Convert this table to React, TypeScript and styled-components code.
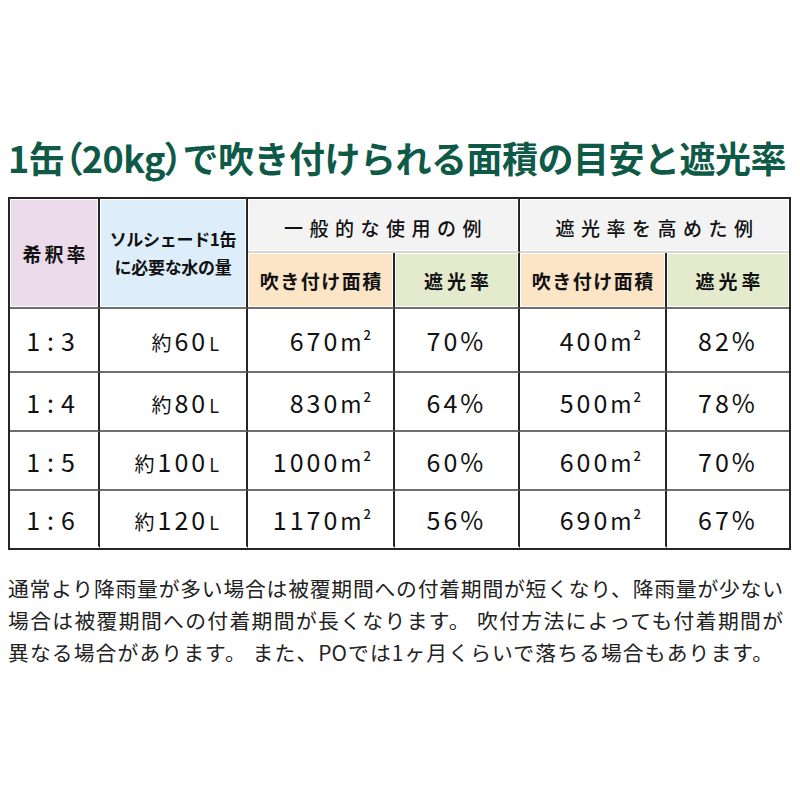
import React from "react";
import styled, { createGlobalStyle } from "styled-components";

const Global = createGlobalStyle`
  html, body { margin: 0; padding: 0; background: #fff; }
  #root { width: 800px; height: 800px; }
`;

const JP = `"Noto Sans CJK JP", "Noto Sans", sans-serif`;

const Page = styled.div`
  width: 800px;
  height: 800px;
  box-sizing: border-box;
  padding: 134px 9px 0 8px;
  font-family: ${JP};
  color: #1a1a1a;
`;

const Title = styled.h1`
  margin: 0;
  font-size: 36px;
  line-height: 46px;
  font-weight: 700;
  color: #0e5a47;
  letter-spacing: -0.5px;
  white-space: nowrap;
`;

const Narrow = styled.span`
  font-feature-settings: "palt";
`;

const Grid = styled.div`
  margin-top: 17px;
  display: grid;
  grid-template-columns: 90px 148px 147px 125px 147px 122px;
  grid-template-rows: 54px 56px 64px 59px 59px 57px;
  border: 2px solid #262626;
  width: fit-content;
`;

type Line = "dark" | "gray" | "light" | "none";
const lineColor: Record<Line, string> = {
  dark: "#262626",
  gray: "#6e6e6e",
  light: "#d6d6d6",
  none: "transparent",
};

const Cell = styled.div<{
  $bg?: string;
  $last?: boolean;
  $bottom?: Line;
  $rows?: number;
  $cols?: number;
  $align?: "center" | "right";
  $pad?: number;
}>`
  box-sizing: border-box;
  display: flex;
  align-items: center;
  justify-content: ${(p) => (p.$align === "right" ? "flex-end" : "center")};
  padding-right: ${(p) => (p.$pad ? `${p.$pad}px` : "0")};
  background: ${(p) => p.$bg || "#fff"};
  box-shadow: inset 0 0 0 1px #fff;
  border-right: ${(p) => (p.$last ? "none" : `2px solid ${lineColor.dark}`)};
  border-bottom: 2px solid ${(p) => lineColor[p.$bottom || "none"]};
  ${(p) => (p.$rows ? `grid-row: span ${p.$rows};` : "")}
  ${(p) => (p.$cols ? `grid-column: span ${p.$cols};` : "")}
  text-align: center;
`;

const HeadLabel = styled.span`
  font-size: 19px;
  font-weight: 700;
  letter-spacing: 3px;
  padding-left: 3px;
  color: #111;
`;

const WaterLabel = styled.span`
  font-size: 17px;
  font-weight: 700;
  line-height: 28px;
  letter-spacing: -0.3px;
  color: #111;
`;

const GroupLabel = styled.span`
  font-size: 19px;
  font-weight: 500;
  letter-spacing: 6.5px;
  padding-left: 6px;
  margin-top: 4px;
  color: #111;
`;

const SubLabel = styled.span<{ $spacing: number }>`
  font-size: 19px;
  font-weight: 700;
  letter-spacing: ${(p) => p.$spacing}px;
  padding-left: ${(p) => p.$spacing}px;
  color: #111;
`;

const Value = styled.span<{ $spacing?: number }>`
  font-size: 25px;
  font-weight: 400;
  color: #111;
  letter-spacing: ${(p) => (p.$spacing ?? 3)}px;
  white-space: nowrap;
  display: inline-flex;
  align-items: baseline;
`;

const Prefix = styled.span`
  font-size: 20px;
  letter-spacing: 3px;
`;

const UnitL = styled.span`
  font-size: 18px;
  letter-spacing: 0;
  margin-left: 1px;
`;

const UnitM = styled.span`
  font-size: 23px;
  letter-spacing: 0;
`;

const Sup = styled.sup`
  font-size: 13px;
  font-weight: 500;
  letter-spacing: 0;
  vertical-align: 0;
  position: relative;
  top: -11px;
  margin-left: 2px;
`;

const Note = styled.div`
  margin-top: 22px;
  font-size: 20.8px;
  line-height: 32px;
  color: #222;
`;

const NoteLine = styled.div<{ $width: number }>`
  width: ${(p) => p.$width}px;
  white-space: nowrap;
  text-align: justify;
  text-align-last: justify;
`;

type Row = {
  ratio: string;
  water: string;
  areaA: string;
  rateA: string;
  areaB: string;
  rateB: string;
};

const rows: Row[] = [
  { ratio: "1:3", water: "60", areaA: "670", rateA: "70%", areaB: "400", rateB: "82%" },
  { ratio: "1:4", water: "80", areaA: "830", rateA: "64%", areaB: "500", rateB: "78%" },
  { ratio: "1:5", water: "100", areaA: "1000", rateA: "60%", areaB: "600", rateB: "70%" },
  { ratio: "1:6", water: "120", areaA: "1170", rateA: "56%", areaB: "690", rateB: "67%" },
];

const Area = ({ n }: { n: string }) => (
  <Value>
    {n}
    <UnitM>m</UnitM>
    <Sup>2</Sup>
  </Value>
);

export default function App() {
  return (
    <>
      <Global />
      <Page>
        <Title>
          1缶<Narrow>（</Narrow>20kg<Narrow>）</Narrow>で吹き付けられる面積の目安と遮光率
        </Title>
        <Grid>
          <Cell $rows={2} $bg="#eadaea" $bottom="gray">
            <HeadLabel>希釈率</HeadLabel>
          </Cell>
          <Cell $rows={2} $bg="#ddedf9" $bottom="gray">
            <WaterLabel>
              ソルシェード1缶
              <br />
              に必要な水の量
            </WaterLabel>
          </Cell>
          <Cell $cols={2} $bg="#f3f3f3" $bottom="light">
            <GroupLabel>一般的な使用の例</GroupLabel>
          </Cell>
          <Cell $cols={2} $bg="#f3f3f3" $bottom="light" $last>
            <GroupLabel>遮光率を高めた例</GroupLabel>
          </Cell>
          <Cell $bg="#fce4c6" $bottom="gray">
            <SubLabel $spacing={1.5}>吹き付け面積</SubLabel>
          </Cell>
          <Cell $bg="#e4ebcd" $bottom="gray">
            <SubLabel $spacing={4}>遮光率</SubLabel>
          </Cell>
          <Cell $bg="#fce4c6" $bottom="gray">
            <SubLabel $spacing={1.5}>吹き付け面積</SubLabel>
          </Cell>
          <Cell $bg="#e4ebcd" $bottom="gray" $last>
            <SubLabel $spacing={4}>遮光率</SubLabel>
          </Cell>

          {rows.map((r, i) => {
            const bottom: Line = i === rows.length - 1 ? "none" : "gray";
            return (
              <React.Fragment key={r.ratio}>
                <Cell $bottom={bottom}>
                  <Value $spacing={7}>{r.ratio}</Value>
                </Cell>
                <Cell $bottom={bottom} $align="right" $pad={27}>
                  <Value>
                    <Prefix>約</Prefix>
                    {r.water}
                    <UnitL>L</UnitL>
                  </Value>
                </Cell>
                <Cell $bottom={bottom} $align="right" $pad={22}>
                  <Area n={r.areaA} />
                </Cell>
                <Cell $bottom={bottom}>
                  <Value>{r.rateA}</Value>
                </Cell>
                <Cell $bottom={bottom} $align="right" $pad={24}>
                  <Area n={r.areaB} />
                </Cell>
                <Cell $bottom={bottom} $last>
                  <Value>{r.rateB}</Value>
                </Cell>
              </React.Fragment>
            );
          })}
        </Grid>
        <Note>
          <NoteLine $width={775}>通常より降雨量が多い場合は被覆期間への付着期間が短くなり、降雨量が少ない</NoteLine>
          <NoteLine $width={775}>場合は被覆期間への付着期間が長くなります。 吹付方法によっても付着期間が</NoteLine>
          <NoteLine $width={765}>異なる場合があります。 また、POでは1ヶ月くらいで落ちる場合もあります。</NoteLine>
        </Note>
      </Page>
    </>
  );
}
